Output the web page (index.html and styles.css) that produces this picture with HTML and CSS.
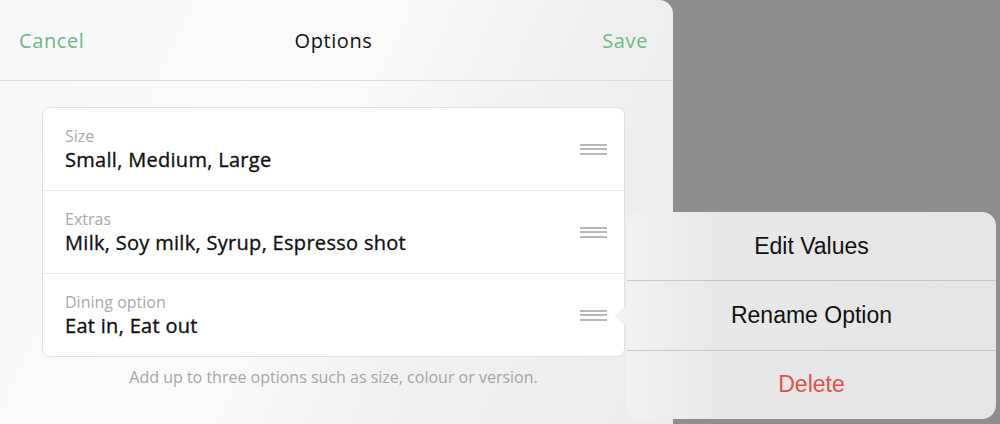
FILE: index.html
```html
<!DOCTYPE html>
<html>
<head>
<meta charset="utf-8">
<link rel="stylesheet" href="styles.css">
</head>
<body>
<div class="stage">
  <div class="panel">
    <header class="nav">
      <span class="nav-btn">Cancel</span>
      <span class="nav-title">Options</span>
      <span class="nav-btn">Save</span>
    </header>
    <main class="content">
      <div class="card">
        <div class="row">
          <div class="row-text">
            <div class="label">Size</div>
            <div class="value">Small, Medium, Large</div>
          </div>
          <span class="handle"><i></i><i></i><i></i></span>
        </div>
        <div class="row">
          <div class="row-text">
            <div class="label">Extras</div>
            <div class="value">Milk, Soy milk, Syrup, Espresso shot</div>
          </div>
          <span class="handle"><i></i><i></i><i></i></span>
        </div>
        <div class="row">
          <div class="row-text">
            <div class="label">Dining option</div>
            <div class="value">Eat in, Eat out</div>
          </div>
          <span class="handle"><i></i><i></i><i></i></span>
        </div>
      </div>
      <p class="hint">Add up to three options such as size, colour or version.</p>
    </main>
  </div>
  <div class="popover">
    <svg class="arrow" width="18" height="44" viewBox="0 0 18 44">
      <path d="M18 0 C18 8 14 12 8 17 C4 20 3 21 3 22 C3 23 4 24 8 27 C14 32 18 36 18 44 Z" fill="#f2f2f2"/>
    </svg>
    <div class="menu-item">Edit Values</div>
    <div class="menu-item">Rename Option</div>
    <div class="menu-item danger">Delete</div>
  </div>
</div>
</body>
</html>
```

FILE: styles.css
```css
html, body {
  margin: 0;
  padding: 0;
}
body {
  background: #8e8e8e;
  width: 1000px;
  height: 424px;
  overflow: hidden;
}
.stage {
  position: relative;
  width: 1000px;
  height: 424px;
}
.panel {
  width: 673px;
  height: 424px;
  border-top-right-radius: 14px;
  background: linear-gradient(115deg, #f8f8f8 0%, #fafafa 45%, #f0f0f0 70%, #ececec 100%);
  font-family: "Open Sans", Lato, sans-serif;
  display: flex;
  flex-direction: column;
}
.nav {
  height: 81px;
  border-bottom: 1px solid #dcdcdc;
  display: flex;
  align-items: center;
  justify-content: space-between;
  padding: 0 25px 0 19px;
  box-sizing: border-box;
  position: relative;
}
.nav-btn {
  color: #6db982;
  font-size: 20px;
  letter-spacing: 0.6px;
}
.nav-title {
  position: absolute;
  left: 0;
  right: 6px;
  text-align: center;
  font-size: 20px;
  letter-spacing: 0.6px;
  color: #111;
  pointer-events: none;
}
.content {
  padding: 26px 48px 0 42px;
}
.card {
  background: #fff;
  border: 1px solid #e0e0e0;
  border-radius: 8px;
  width: 583px;
  box-sizing: border-box;
}
.row {
  height: 83px;
  display: flex;
  align-items: center;
  padding: 0 17px 0 22px;
  border-top: 1px solid #e8e8e8;
  box-sizing: border-box;
}
.row:first-child {
  border-top: none;
  height: 82px;
}
.row-text {
  flex: 1;
}
.label {
  font-size: 16px;
  color: #a9a9a9;
  line-height: 20px;
}
.value {
  font-size: 20px;
  letter-spacing: 0.3px;
  -webkit-text-stroke: 0.35px #111;
  color: #111;
  line-height: 27px;
}
.handle {
  display: flex;
  flex-direction: column;
  gap: 2.5px;
  width: 27px;
}
.handle i {
  display: block;
  height: 2px;
  background: #b8b8b8;
}
.hint {
  margin: 9px 0 0;
  width: 583px;
  text-align: center;
  font-size: 16px;
  color: #a5a5a5;
}
.popover {
  position: absolute;
  left: 627px;
  top: 212px;
  width: 369px;
  height: 207px;
  border-radius: 14px;
  background: linear-gradient(90deg, #f1f1f1 0%, #e8e8e8 25%, #e5e5e5 100%);
  font-family: "Liberation Sans", Arial, sans-serif;
  display: flex;
  flex-direction: column;
}
.arrow {
  position: absolute;
  left: -15px;
  top: 82px;
}
.menu-item {
  flex: 1;
  display: flex;
  align-items: center;
  justify-content: center;
  font-size: 23px;
  color: #111;
  border-top: 1px solid #c8c8c8;
}
.menu-item:first-of-type {
  border-top: none;
}
.danger {
  color: #df5246;
}
```
